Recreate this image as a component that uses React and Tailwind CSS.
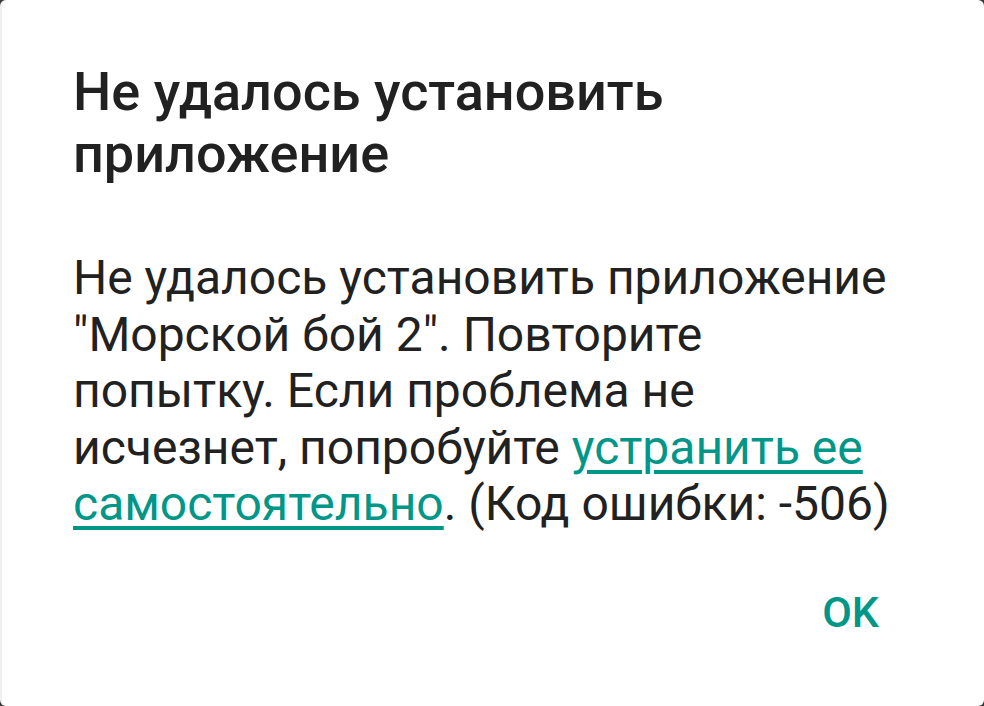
export default function App() {
  return (
    <div className="w-[984px] h-[706px] bg-[#3a3a3a] overflow-hidden">
      <div
        className="w-full h-full bg-white rounded-[6px] border-l-2 border-[#efefef] flex flex-col pl-[71px] pr-[72px] pt-[61px]"
        style={{ fontFamily: "Roboto, 'Noto Sans', sans-serif" }}
      >
        <h1 className="text-[54px] leading-[62px] font-medium text-[#212121]">
          Не удалось установить приложение
        </h1>
        <p className="mt-[65px] text-[48px] leading-[56.5px] text-[#212121]">
          Не удалось установить приложение "Морской бой 2". Повторите попытку. Если проблема не исчезнет, попробуйте{" "}
          <span className="text-[#009688] underline decoration-[4px] underline-offset-[6px]">
            устранить ее самостоятельно
          </span>
          . (Код ошибки: -506)
        </p>
        <div className="flex justify-end mt-[53px] pr-[33px]">
          <button className="text-[43px] leading-[52px] font-medium text-[#009688] uppercase">OK</button>
        </div>
      </div>
    </div>
  );
}
